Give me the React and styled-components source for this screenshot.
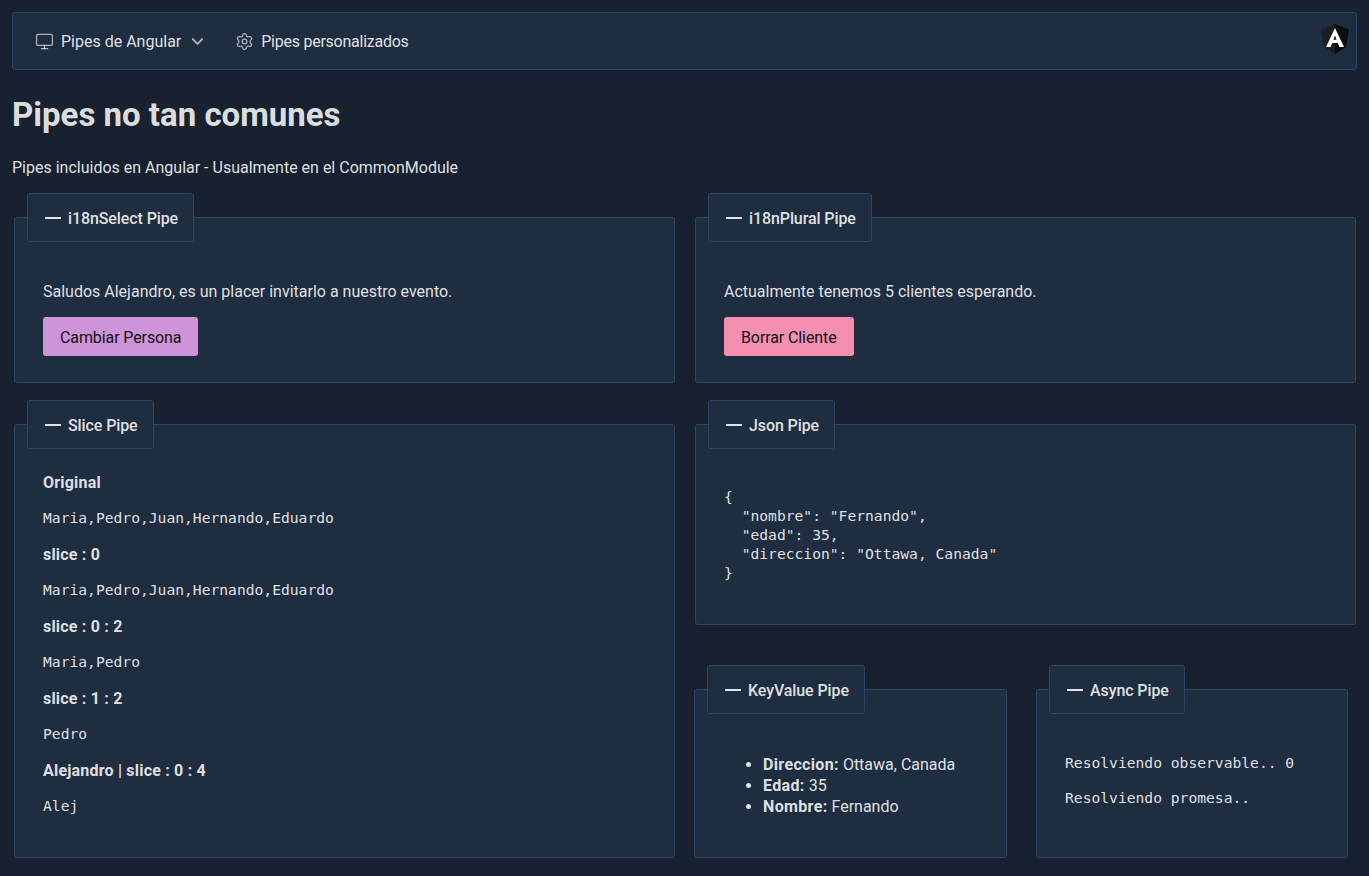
import React from 'react'
import styled, { createGlobalStyle } from 'styled-components'
import { ChevronDown, Monitor, Settings } from 'lucide-react'

const GlobalStyle = createGlobalStyle`
    html, body {
        margin: 0;
        background: #17212f;
    }
    body {
        color: rgba(255, 255, 255, .87);
        font-family: Roboto, "Noto Sans", sans-serif;
        font-size: 16px;
        line-height: 21px;
    }
`;

const Page = styled.div`
    padding: 12px;
    height: 876px;
    box-sizing: border-box;
    overflow: hidden;
`;

const Navbar = styled.nav`
    height: 58px;
    box-sizing: border-box;
    display: flex;
    align-items: center;
    justify-content: space-between;
    padding: 0 7px 0 12px;
    background: #1f2d40;
    border: 1px solid #304562;
    border-radius: 3px;
`;

const NavItems = styled.div`
    display: flex;
    align-items: center;
    gap: 8px;
`;

const NavItem = styled.div`
    display: flex;
    align-items: center;
    gap: 7px;
    padding: 0 10px;
    letter-spacing: ${(p) => p.$spacing || 0}px;
    svg {
        color: rgba(255, 255, 255, .65);
        flex: none;
    }
`;

const Title = styled.h1`
    margin: 27px 0 0;
    font-size: 33px;
    line-height: 36px;
    font-weight: 700;
`;

const Subtitle = styled.p`
    margin: 24px 0 0;
`;

const Columns = styled.div`
    display: grid;
    grid-template-columns: 661px 661px;
    column-gap: 20px;
    row-gap: 17px;
    margin: 15px 0 0 2px;
`;

const RightColumn = styled.div`
    display: flex;
    flex-direction: column;
    gap: 40px;
`;

const SmallPanels = styled.div`
    display: grid;
    grid-template-columns: 313px 312px;
    column-gap: 29px;
    margin-left: -1px;
`;

const Fieldset = styled.fieldset`
    min-width: 0;
    margin: 0;
    padding: 0 12px;
    background: #1f2d40;
    border: 1px solid #304562;
    border-radius: 3px;
`;

const Legend = styled.legend`
    display: flex;
    align-items: center;
    gap: 7px;
    height: 49px;
    box-sizing: border-box;
    padding: 1px 15px 0 17px;
    background: #1f2d40;
    border: 1px solid #304562;
    border-radius: 3px;
    font-weight: 500;
    letter-spacing: -.1px;
`;

const Dash = styled.span`
    width: 16px;
    height: 2px;
    background: rgba(255, 255, 255, .87);
`;

const Content = styled.div`
    padding: ${(p) => p.$top}px 16px ${(p) => p.$bottom}px;
`;

const Text = styled.p`
    margin: 0 0 15px;
`;

const Button = styled.button`
    display: block;
    height: 39px;
    padding: 1px 17px 0;
    border: none;
    border-radius: 3px;
    background: ${(p) => p.$color};
    color: #121212;
    font: inherit;
    letter-spacing: -.1px;
`;

const Label = styled.p`
    margin: 0 0 15px;
    font-weight: 700;
    letter-spacing: .2px;
`;

const Mono = styled.p`
    margin: -1px 0 16px;
    font-family: "DejaVu Sans Mono", monospace;
    font-size: 14.65px;
`;

const Pre = styled.pre`
    margin: 0;
    font-family: "DejaVu Sans Mono", monospace;
    font-size: 14.65px;
    line-height: 19px;
`;

const AsyncLine = styled.p`
    margin: 0 0 16px;
    font-family: "DejaVu Sans Mono", monospace;
    font-size: 14.65px;
    line-height: 19px;
    &:last-child {
        margin-bottom: 0;
    }
`;

const List = styled.ul`
    margin: 0;
    padding-left: 40px;
`;

const Key = styled.b`
    letter-spacing: .35px;
`;

const LogoMark = styled.svg`
    margin-top: -4px;
`;

const Logo = () => (
    <LogoMark width="28" height="30" viewBox="0 0 28 30">
        <polygon points="14,0 0,5.5 3,23 14,30" fill="#1b1d22" />
        <polygon points="14,0 28,5.5 25,23 14,30" fill="#0d0d10" />
        <path d="M14 4 L5 23 H9.6 L11.2 19 H16.8 L18.4 23 H23 Z M12.4 15.8 L14 11.5 L15.6 15.8 Z" fill="#fff" fillRule="evenodd" />
    </LogoMark>
);

const Panel = ({ title, top = 39, bottom = 41, children }) => (
    <Fieldset>
        <Legend><Dash />{title}</Legend>
        <Content $top={top} $bottom={bottom}>{children}</Content>
    </Fieldset>
);

const sliceRows = [
    ['Original', 'Maria,Pedro,Juan,Hernando,Eduardo'],
    ['slice : 0', 'Maria,Pedro,Juan,Hernando,Eduardo'],
    ['slice : 0 : 2', 'Maria,Pedro'],
    ['slice : 1 : 2', 'Pedro'],
    ['Alejandro | slice : 0 : 4', 'Alej'],
];

const json = `{
  "nombre": "Fernando",
  "edad": 35,
  "direccion": "Ottawa, Canada"
}`;

export default function App() {
    return (
        <Page>
            <GlobalStyle />
            <Navbar>
                <NavItems>
                    <NavItem>
                        <Monitor size={19} strokeWidth={1.6} />
                        Pipes de Angular
                        <ChevronDown size={19} strokeWidth={2.4} />
                    </NavItem>
                    <NavItem $spacing={-0.25}>
                        <Settings size={19} strokeWidth={1.6} />
                        Pipes personalizados
                    </NavItem>
                </NavItems>
                <Logo />
            </Navbar>
            <Title>Pipes no tan comunes</Title>
            <Subtitle>Pipes incluidos en Angular - Usualmente en el CommonModule</Subtitle>
            <Columns>
                <Panel title="i18nSelect Pipe" bottom={26}>
                    <Text>Saludos Alejandro, es un placer invitarlo a nuestro evento.</Text>
                    <Button $color="#ce93d8">Cambiar Persona</Button>
                </Panel>
                <Panel title="i18nPlural Pipe" bottom={26}>
                    <Text>Actualmente tenemos 5 clientes esperando.</Text>
                    <Button $color="#f48fb1">Borrar Cliente</Button>
                </Panel>
                <Panel title="Slice Pipe" top={23} bottom={13}>
                    {sliceRows.map(([label, value]) => (
                        <React.Fragment key={label}>
                            <Label>{label}</Label>
                            <Mono>{value}</Mono>
                        </React.Fragment>
                    ))}
                </Panel>
                <RightColumn>
                    <Panel title="Json Pipe" top={38} bottom={42}>
                        <Pre>{json}</Pre>
                    </Panel>
                    <SmallPanels>
                        <Panel title="KeyValue Pipe" top={40} bottom={40}>
                            <List>
                                <li><Key>Direccion:</Key> Ottawa, Canada</li>
                                <li><Key>Edad:</Key> 35</li>
                                <li><Key>Nombre:</Key> Fernando</li>
                            </List>
                        </Panel>
                        <Panel title="Async Pipe">
                            <AsyncLine>Resolviendo observable.. 0</AsyncLine>
                            <AsyncLine>Resolviendo promesa..</AsyncLine>
                        </Panel>
                    </SmallPanels>
                </RightColumn>
            </Columns>
        </Page>
    )
}
